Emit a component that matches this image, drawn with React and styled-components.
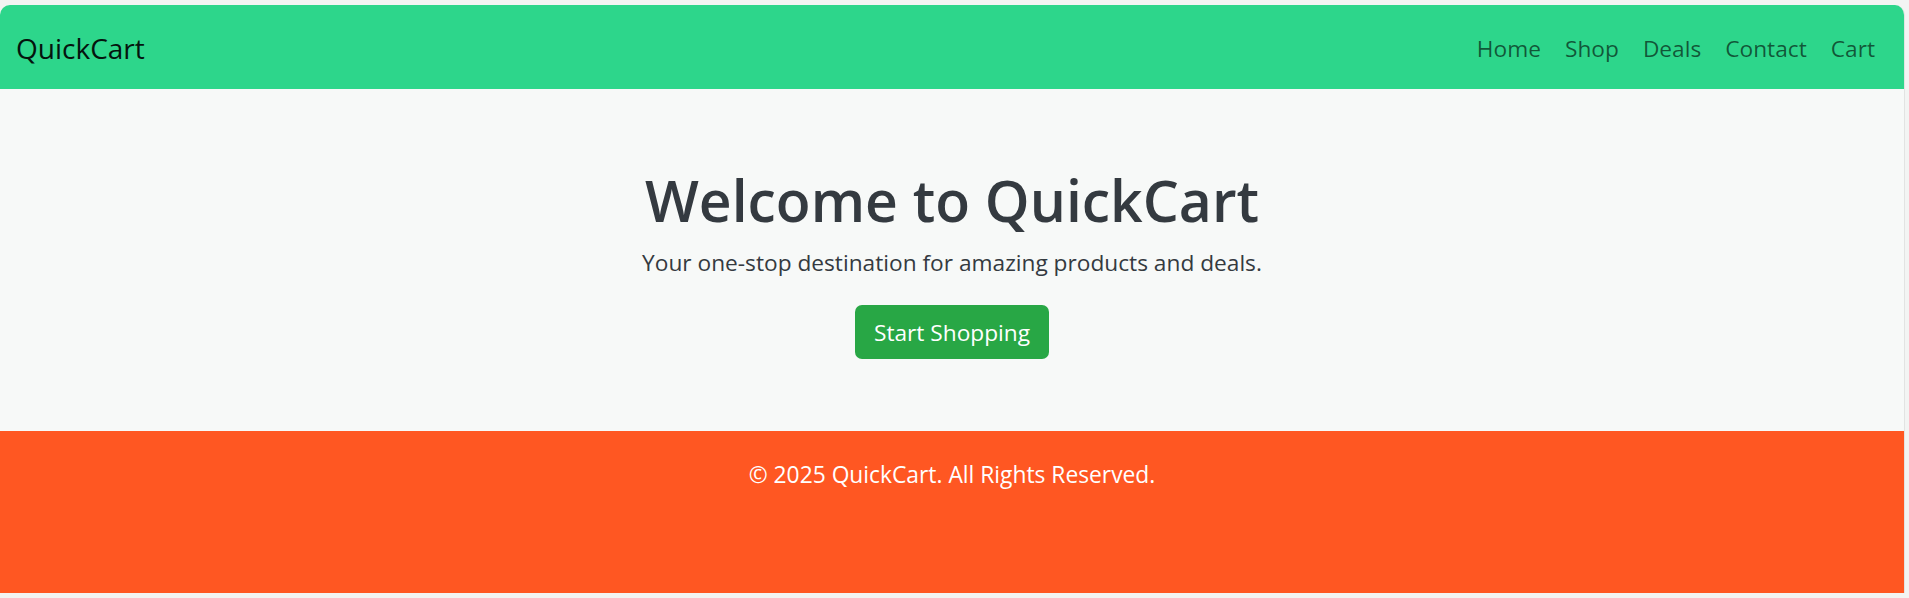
import React from "react";
import styled, { createGlobalStyle } from "styled-components";

const links = ["Home", "Shop", "Deals", "Contact", "Cart"];

export default function App() {
  return (
    <>
      <GlobalStyle />
      <Frame>
        <Navbar>
          <Brand>QuickCart</Brand>
          <NavList>
            {links.map((l) => (
              <NavLink key={l}>{l}</NavLink>
            ))}
          </NavList>
        </Navbar>
        <Hero>
          <Title>Welcome to QuickCart</Title>
          <Lead>Your one-stop destination for amazing products and deals.</Lead>
          <ShopBtn>Start Shopping</ShopBtn>
        </Hero>
        <Footer>
          <FooterText>© 2025 QuickCart. All Rights Reserved.</FooterText>
        </Footer>
      </Frame>
    </>
  );
}

// Styles
const GlobalStyle = createGlobalStyle`
  html, body {
    margin: 0;
    padding: 0;
    background: #f3f4f3;
    font-family: "Open Sans", "Noto Sans", sans-serif;
  }
`;

const Frame = styled.div`
  width: 1904px;
  margin-top: 5px;
  border-radius: 10px 10px 0 0;
  overflow: hidden;
  border-right: 1px solid #e2e3e2;
`;

const Navbar = styled.nav`
  height: 84px;
  background: #2dd68b;
  display: flex;
  align-items: center;
  justify-content: space-between;
  padding: 2px 16px 0;
  box-sizing: border-box;
`;

const Brand = styled.div`
  font-size: 28px;
  color: #05140e;
`;

const NavList = styled.div`
  display: flex;
  align-items: center;
`;

const NavLink = styled.a`
  font-size: 22.7px;
  color: rgba(0, 0, 0, 0.6);
  padding: 0 12px;
  cursor: pointer;
  &:last-child {
    padding-right: 13px;
  }
`;

const Hero = styled.section`
  height: 342px;
  background: #f7f9f8;
  display: flex;
  flex-direction: column;
  align-items: center;
  padding-top: 77px;
  box-sizing: border-box;
`;

const Title = styled.h1`
  margin: 0;
  font-size: 57px;
  font-weight: 600;
  line-height: 1.2;
  color: #343a40;
`;

const Lead = styled.p`
  margin: 12px 0 0;
  font-size: 22.7px;
  color: #343a40;
  line-height: 1.5;
`;

const ShopBtn = styled.button`
  margin-top: 25px;
  width: 194px;
  height: 54px;
  background: #28a745;
  border: none;
  border-radius: 7px;
  color: #fff;
  font-family: inherit;
  font-size: 22.7px;
  cursor: pointer;
`;

const Footer = styled.footer`
  height: 162px;
  background: #ff5722;
  display: flex;
  justify-content: center;
  padding-top: 27px;
  box-sizing: border-box;
`;

const FooterText = styled.p`
  margin: 0;
  font-size: 22.8px;
  color: #fff;
  line-height: 1.5;
`;
